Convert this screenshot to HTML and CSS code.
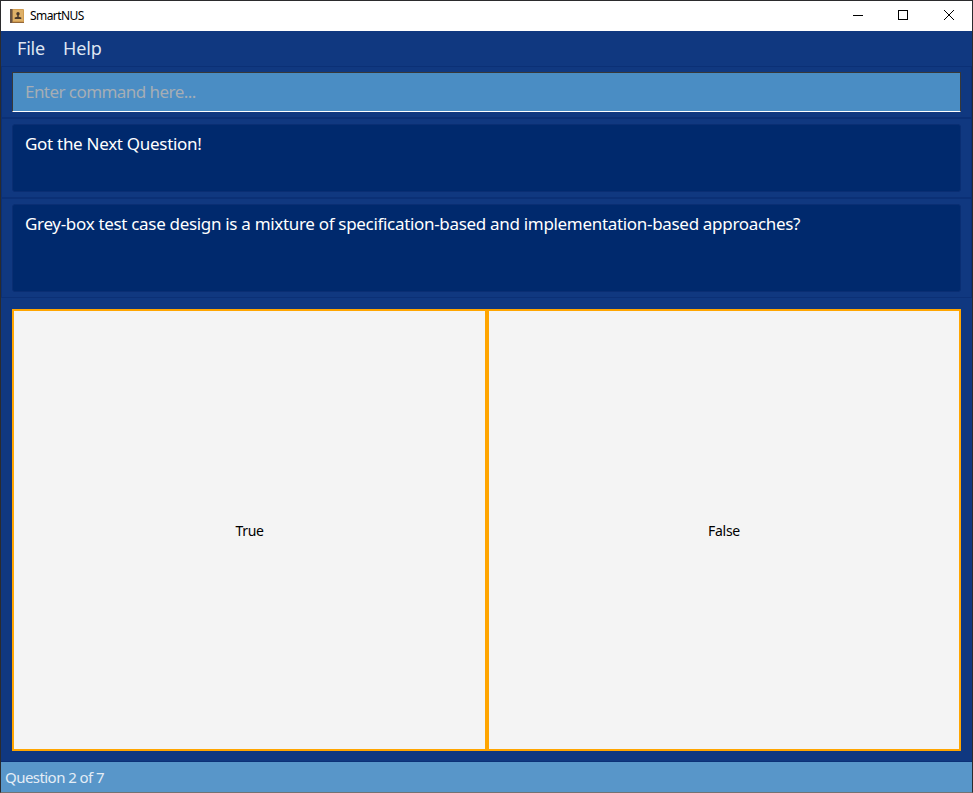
FILE: index.html
```html
<!DOCTYPE html>
<html lang="en">
<head>
<meta charset="utf-8">
<title>SmartNUS</title>
<link rel="stylesheet" href="styles.css">
</head>
<body>
<div class="window">
  <header class="titlebar">
    <svg class="app-icon" width="14" height="14" viewBox="0 0 14 14">
      <rect width="14" height="14" rx="1" fill="#d09c50"/>
      <rect x="3" y="1" width="10" height="11" fill="#deb068"/>
      <rect width="2.5" height="14" fill="#6b5545"/>
      <rect x="2" y="13" width="12" height="1" fill="#94683a"/>
      <circle cx="8" cy="4.700" r="1.700" fill="#49382b"/>
      <path d="M7.300 5h1.400v2.700l2.600.8V10H4.700V8.500l2.600-.8z" fill="#49382b"/>
    </svg>
    <span class="title">SmartNUS</span>
    <div class="controls">
      <svg width="46" height="30" viewBox="0 0 46 30"><path d="M18 14.500h10" stroke="#000"/></svg>
      <svg width="46" height="30" viewBox="0 0 46 30"><rect x="17.500" y="9.500" width="9" height="9" fill="none" stroke="#000"/></svg>
      <svg width="46" height="30" viewBox="0 0 46 30"><path d="M17 9l10 10M27 9L17 19" stroke="#000"/></svg>
    </div>
  </header>
  <nav class="menu"><span class="file">File</span><span class="help">Help</span></nav>
  <section class="pane command"><input class="field" type="text" placeholder="Enter command here..."></section>
  <section class="pane result"><div class="display"><span class="result-text">Got the Next Question!</span></div></section>
  <section class="pane question"><div class="display"><span class="question-text">Grey-box test case design is a mixture of specification-based and implementation-based approaches?</span></div></section>
  <main class="answers">
    <div class="answer"><span class="true">True</span></div>
    <div class="answer"><span class="false">False</span></div>
  </main>
  <footer class="status"><span>Question 2 of 7</span></footer>
</div>
</body>
</html>
```
FILE: styles.css
```css
* { box-sizing: border-box; }
body {
  margin: 0;
  font-family: "Noto Sans", "Open Sans", sans-serif;
  overflow: hidden;
}
.window {
  width: 973px;
  height: 793px;
  display: flex;
  flex-direction: column;
  background: #103880;
  border: 1px solid #2b2b2d;
  border-bottom-color: #737373;
}
.titlebar {
  height: 30px;
  flex: none;
  display: flex;
  align-items: center;
  padding-left: 9px;
  background: #fff;
}
.app-icon { margin-bottom: 1px; }
.title {
  margin-left: 6px;
  padding-bottom: 1px;
  font-size: 12px;
  letter-spacing: -0.57px;
  color: #000;
}
.controls {
  display: flex;
  margin-left: auto;
  margin-right: -1px;
  height: 30px;
}
.menu {
  height: 35px;
  flex: none;
  padding-left: 16px;
  display: flex;
  gap: 18px;
  font-size: 18px;
  line-height: 35px;
  color: #dfe6f2;
}
.file { width: 28px; letter-spacing: -0.2px; }
.help { letter-spacing: -0.15px; }
.pane {
  flex: none;
  border: 1px solid #0b3076;
  padding: 5px 10px;
}
.command { height: 52px; }
.field {
  display: block;
  width: 949px;
  height: 40px;
  padding: 0 12px 2px;
  border: 1px solid #383838;
  border-bottom-color: #fff;
  outline: none;
  border-radius: 0;
  background: #4a8dc4;
  font: 17px "Noto Sans", "Open Sans", sans-serif;
  letter-spacing: -0.55px;
}
.field::placeholder { color: #a5adb5; opacity: 1; }
.result { height: 80px; }
.question { height: 100px; }
.display {
  height: 100%;
  border: 1px solid #0a2e73;
  border-radius: 3px;
  background: #00296d;
  padding: 7px 12px;
  color: #fff;
  font-size: 17px;
  line-height: 24px;
  white-space: nowrap;
}
.result-text { letter-spacing: -0.29px; }
.question-text { letter-spacing: -0.315px; }
.answers {
  flex: none;
  height: 442px;
  margin: 11px 11px 10px;
  display: grid;
  grid-template-columns: 475px 474px;
}
.answer {
  border: 2px solid #ffa500;
  background: #f4f4f4;
  display: flex;
  align-items: center;
  justify-content: center;
  font-size: 14px;
  color: #000;
}
.true, .false { letter-spacing: -0.3px; }
.status {
  flex: 1;
  border-top: 1px solid #0b3076;
  background: #5896c9;
  padding-left: 4px;
  color: #e3edf6;
  font-size: 15px;
  line-height: 30px;
  letter-spacing: -0.55px;
}
```
